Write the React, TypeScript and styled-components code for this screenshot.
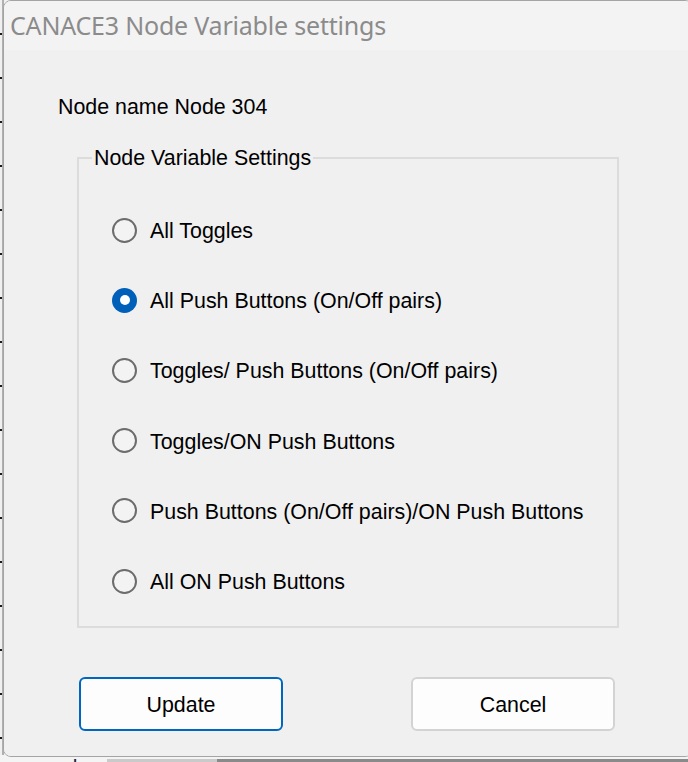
import React, { useState } from "react";
import styled, { createGlobalStyle } from "styled-components";

const GlobalStyle = createGlobalStyle`
  html, body { margin: 0; padding: 0; background: #f0f0f0; }
  body { width: 688px; height: 762px; overflow: hidden; }
  * { box-sizing: border-box; }
`;

const Desktop = styled.div`
  position: relative;
  width: 688px;
  height: 762px;
  overflow: hidden;
  background: #f0f0f0;
`;

const LeftRuler = styled.div`
  position: absolute;
  left: 0;
  top: 0;
  width: 4px;
  height: 762px;
  border-right: 2px solid #b0b0b0;
  background-image: linear-gradient(to bottom, #1a1a1a 0px, #1a1a1a 2px, transparent 2px);
  background-size: 3px 44px;
  background-position: 0 33px;
  background-repeat: repeat-y;
`;

const BottomStrip = styled.div`
  position: absolute;
  left: 0;
  top: 755px;
  width: 688px;
  height: 7px;
  display: flex;
  align-items: flex-end;
  background: #f4f4f4;
`;

const BehindText = styled.span`
  font-family: "Liberation Sans", Arial, sans-serif;
  font-size: 21px;
  line-height: 24px;
  color: #1c1c3c;
  margin-left: 32px;
  margin-bottom: -17px;
  width: 75px;
`;

const ScrollTrack = styled.div<{ $tone: string; $w: number }>`
  height: 3px;
  width: ${(p) => p.$w}px;
  background: ${(p) => p.$tone};
`;

const Window = styled.div`
  position: absolute;
  left: 3px;
  top: 0;
  width: 690px;
  height: 757px;
  border: 1px solid #a4a4a4;
  border-radius: 8px;
  background: #f0f0f0;
  display: flex;
  flex-direction: column;
  overflow: hidden;
`;

const TitleBar = styled.div`
  height: 49px;
  background: #f3f3f3;
  display: flex;
  align-items: center;
  padding: 0 0 1px 6px;
  font-family: "Noto Sans", "Open Sans", sans-serif;
  font-size: 25px;
  color: #8b8b8b;
  letter-spacing: -0.2px;
`;

const Client = styled.div`
  flex: 1;
  background: #f0f0f0;
  padding: 45px 0 0 54px;
  font-family: "Liberation Sans", Arial, sans-serif;
  font-size: 21.4px;
  line-height: 24px;
  color: #000;
  display: flex;
  flex-direction: column;
`;

const NodeName = styled.div`
  height: 24px;
`;

const GroupBox = styled.fieldset`
  margin: 27px 0 0 19px;
  width: 542px;
  border: 2px solid #dcdcdc;
  padding: 25px 0 10px 33px;
  min-width: 0;
`;

const Legend = styled.legend`
  padding: 0 2px;
  margin-left: -20px;
  line-height: 24px;
`;

const RadioRow = styled.label`
  height: 70.2px;
  display: flex;
  align-items: center;
  gap: 13px;
  cursor: default;
`;

const RadioLabel = styled.span`
  padding-top: 2px;
`;

const RadioCircle = styled.span<{ $checked: boolean }>`
  width: 25px;
  height: 25px;
  border-radius: 50%;
  flex: none;
  display: flex;
  align-items: center;
  justify-content: center;
  border: ${(p) => (p.$checked ? "none" : "2px solid #6c6c6c")};
  background: ${(p) => (p.$checked ? "#005fb8" : "#f3f3f3")};
  &::after {
    content: "";
    display: ${(p) => (p.$checked ? "block" : "none")};
    width: 10px;
    height: 10px;
    border-radius: 50%;
    background: #fff;
  }
`;

const ButtonRow = styled.div`
  display: flex;
  gap: 128px;
  margin: 49px 0 0 21px;
`;

const DialogButton = styled.button<{ $primary?: boolean }>`
  width: 204px;
  height: 54px;
  background: #fdfdfd;
  border: ${(p) => (p.$primary ? "2px solid #0067c0" : "2px solid #d3d3d3")};
  border-radius: 6px;
  font-family: "Liberation Sans", Arial, sans-serif;
  font-size: 21.4px;
  color: #000;
  padding: 3px 0 0;
`;

const options = [
  "All Toggles",
  "All Push Buttons (On/Off pairs)",
  "Toggles/ Push Buttons (On/Off pairs)",
  "Toggles/ON Push Buttons",
  "Push Buttons (On/Off pairs)/ON Push Buttons",
  "All ON Push Buttons",
];

export default function App() {
  const [selected, setSelected] = useState(1);
  return (
    <>
      <GlobalStyle />
      <Desktop>
        <LeftRuler />
        <BottomStrip>
          <BehindText>number</BehindText>
          <ScrollTrack $tone="#cacaca" $w={110} />
          <ScrollTrack $tone="#8a8a8a" $w={471} />
        </BottomStrip>
        <Window>
          <TitleBar>CANACE3 Node Variable settings</TitleBar>
          <Client>
            <NodeName>Node name Node 304</NodeName>
            <GroupBox>
              <Legend>Node Variable Settings</Legend>
              {options.map((o, i) => (
                <RadioRow key={o} onClick={() => setSelected(i)}>
                  <RadioCircle $checked={selected === i} />
                  <RadioLabel>{o}</RadioLabel>
                </RadioRow>
              ))}
            </GroupBox>
            <ButtonRow>
              <DialogButton $primary>Update</DialogButton>
              <DialogButton>Cancel</DialogButton>
            </ButtonRow>
          </Client>
        </Window>
      </Desktop>
    </>
  );
}
